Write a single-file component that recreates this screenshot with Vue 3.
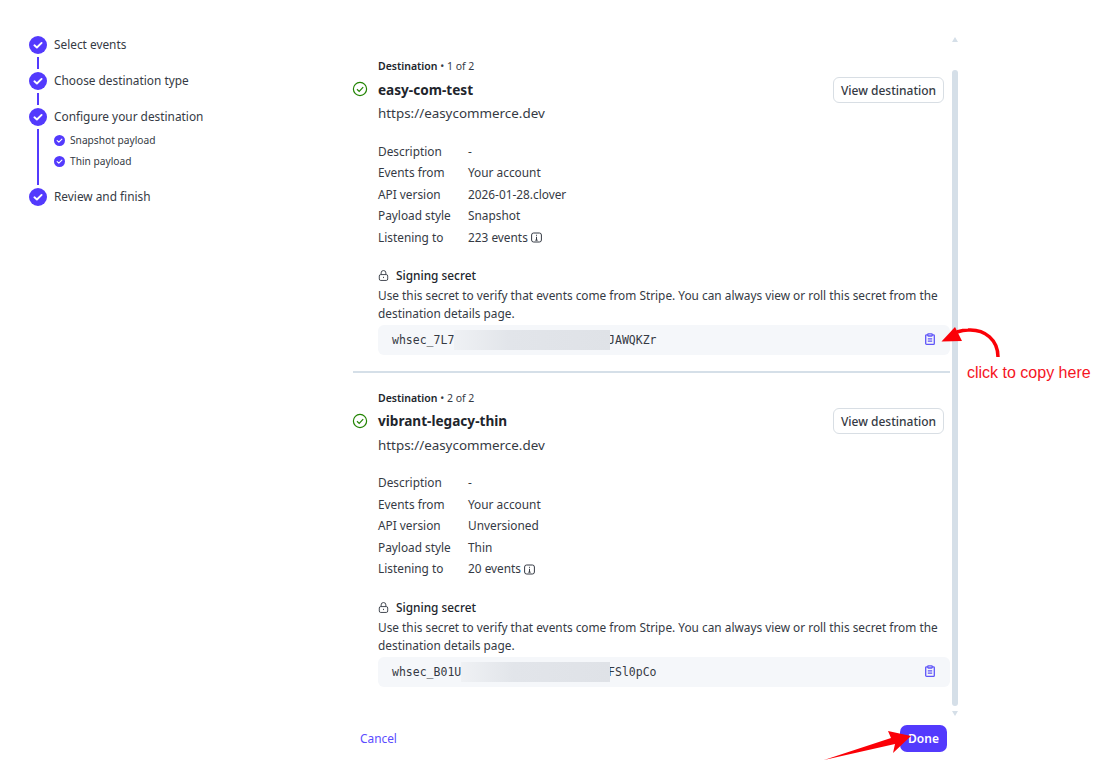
<script setup>
const destinations = [
  { index: 1, name: 'easy-com-test', version: '2026-01-28.clover', style: 'Snapshot', events: '223 events', start: 'whsec_7L7', end: 'JAWQKZr' },
  { index: 2, name: 'vibrant-legacy-thin', version: 'Unversioned', style: 'Thin', events: '20 events', start: 'whsec_B01U', end: 'FSl0pCo' }
]
const redactedWidth = (start) => `${218 - start.length * 6.92}px`
</script>

<template>
  <div class="page">
    <aside class="sidebar">
      <div class="step"><svg class="check" viewBox="0 0 18 18"><circle cx="9" cy="9" r="9" /><path d="M5.4 9.3l2.5 2.2 4.7-4.6" /></svg><span class="label">Select events</span></div>
      <div class="link"></div>
      <div class="step"><svg class="check" viewBox="0 0 18 18"><circle cx="9" cy="9" r="9" /><path d="M5.4 9.3l2.5 2.2 4.7-4.6" /></svg><span class="label">Choose destination type</span></div>
      <div class="link"></div>
      <div class="step"><svg class="check" viewBox="0 0 18 18"><circle cx="9" cy="9" r="9" /><path d="M5.4 9.3l2.5 2.2 4.7-4.6" /></svg><span class="label">Configure your destination</span></div>
      <div class="branch">
        <div class="link long"></div>
        <div class="subs">
          <div class="sub"><svg class="check small" viewBox="0 0 18 18"><circle cx="9" cy="9" r="9" /><path d="M5.2 9.3l2.7 2.4 5-4.9" /></svg>Snapshot payload</div>
          <div class="sub"><svg class="check small" viewBox="0 0 18 18"><circle cx="9" cy="9" r="9" /><path d="M5.2 9.3l2.7 2.4 5-4.9" /></svg>Thin payload</div>
        </div>
      </div>
      <div class="step"><svg class="check" viewBox="0 0 18 18"><circle cx="9" cy="9" r="9" /><path d="M5.4 9.3l2.5 2.2 4.7-4.6" /></svg><span class="label">Review and finish</span></div>
    </aside>

    <main class="main">
      <div class="scroll-row">
        <div class="content">
          <section v-for="d in destinations" :key="d.index" class="dest">
            <div class="eyebrow"><b>Destination</b> • {{ d.index }} of 2</div>
            <div class="title-row">
              <svg class="ok" viewBox="0 0 16 16"><circle cx="8" cy="8" r="6.6" /><path d="M5 8.3l2.2 2.1 4-4.2" /></svg>
              <h2>{{ d.name }}</h2>
              <button class="view">View destination</button>
            </div>
            <div class="url">https://easycommerce.dev</div>
            <dl class="facts">
              <dt>Description</dt><dd>-</dd>
              <dt>Events from</dt><dd>Your account</dd>
              <dt>API version</dt><dd>{{ d.version }}</dd>
              <dt>Payload style</dt><dd>{{ d.style }}</dd>
              <dt>Listening to</dt>
              <dd class="events">{{ d.events }}
                <svg class="info" viewBox="0 0 11 11"><rect x=".6" y="1" width="9.8" height="9" rx="2" /><path d="M5.500 4.800v3.400M4.300 8.200h2.400M5.500 2.800v1" /></svg>
              </dd>
            </dl>
            <div class="secret-head">
              <svg class="lock" viewBox="0 0 12 12"><rect x="1.400" y="5" width="9.200" height="6.400" rx="1.600" /><path d="M3.400 5V3.200a2.600 2.600 0 0 1 5.200 0V5M6 7.400v1.400" /></svg>
              Signing secret
            </div>
            <p class="secret-text">Use this secret to verify that events come from Stripe. You can always view or roll this secret from the destination details page.</p>
            <div class="code">
              <span class="plain">{{ d.start }}</span>
              <span class="redacted" :style="{ width: redactedWidth(d.start) }"></span>
              <span class="plain">{{ d.end }}</span>
              <svg class="copy" viewBox="0 0 10 12"><path d="M2.800 1.800H1.600a.9.9 0 0 0-.9.9v7.700a.9.9 0 0 0 .9.900h6.800a.9.9 0 0 0 .9-.9V2.700a.9.9 0 0 0-.9-.9H7.200" /><rect x="2.800" y=".8" width="4.400" height="2.200" rx=".5" /><path d="M2.800 5.800h4.400M2.800 8.200h4.400" /></svg>
            </div>
          </section>
        </div>
        <div class="scrollbar">
          <span class="arrow up"></span>
          <span class="thumb"></span>
          <span class="arrow down"></span>
        </div>
      </div>
      <footer class="footer">
        <a class="cancel">Cancel</a>
        <button class="done">Done</button>
      </footer>
    </main>

    <span class="note">click to copy here</span>
    <svg class="marks" viewBox="0 0 1107 774">
      <path class="curve" d="M998 357C998 340 985 329 968 330C964 330 960 331 957 332" />
      <polygon points="941.500,341.500 955,327 962,341" />
      <polygon points="824,760 891,738 888,731 911,736 893,753 895,744" />
    </svg>
  </div>
</template>

<style scoped>
.page { position: relative; width: 1107px; height: 774px; overflow: hidden; display: flex; background: #fff; color: #353a44; font-family: "Noto Sans", sans-serif; font-size: 11.850px; }
.sidebar { width: 353px; box-sizing: border-box; padding: 36px 0 0 29px; flex: none; }
.step { display: flex; align-items: center; gap: 7px; height: 18px; line-height: 18px; }
.label { margin-bottom: 2px; line-height: 16px; }
.check { width: 18px; height: 18px; flex: none; }
.check circle { fill: #533afd; }
.check path { fill: none; stroke: #fff; stroke-width: 1.9; stroke-linecap: round; stroke-linejoin: round; }
.check.small { width: 11px; height: 11px; }
.link { width: 2px; height: 12px; margin: 3px 0 3px 8px; background: #533afd; }
.branch { display: flex; }
.link.long { height: 56px; flex: none; }
.subs { margin: 7px 0 0 15px; display: flex; flex-direction: column; gap: 7px; }
.sub { display: flex; align-items: center; gap: 5px; height: 14px; font-size: 10.200px; }
.main { width: 610px; flex: none; }
.scroll-row { display: flex; height: 686px; }
.content { width: 597px; flex: none; padding-top: 41px; }
.dest { height: 332px; box-sizing: border-box; padding: 17px 0 0 25px; border-bottom: 2px solid #d5dfe8; }
.dest:last-child { border-bottom: 0; }
.eyebrow { font-size: 10.500px; line-height: 16px; color: #353a44; }
.eyebrow b { font-weight: 600; color: #21252c; }
.title-row { position: relative; height: 30px; display: flex; align-items: center; margin-top: 1px; }
.dest:last-child .title-row { margin-top: 0; }
.dest:last-child .url { margin-top: 0; }
.dest:last-child .ok { top: 7px; }
.dest:last-child .facts { margin-top: 18.450px; }
.dest:last-child .secret-head { margin-top: 18.550px; }
.ok { position: absolute; left: -26px; top: 6px; width: 16px; height: 16px; }
.ok circle, .ok path { fill: none; stroke: #228403; stroke-width: 1.200; }
h2 { margin: -2px 0 0; font-size: 13.600px; font-weight: 700; color: #21252c; }
.view { margin-left: auto; margin-right: 6px; height: 26px; width: 111px; padding: 0; border: 1px solid #d8dee4; border-radius: 6px; background: #fff; color: #353a44; font: 500 12px "Noto Sans", sans-serif; }
.url { font-size: 13.400px; line-height: 18px; margin-top: -1px; }
.facts { display: grid; grid-template-columns: 90px 1fr; margin: 18.600px 0 0; grid-auto-rows: 21.500px; line-height: 21.500px; }
dt, dd { margin: 0; }
.events { display: flex; align-items: center; gap: 3px; }
.info { width: 11px; height: 11px; fill: none; stroke: #353a44; stroke-width: 1; }
.secret-head { display: flex; align-items: center; gap: 7px; margin-top: 18.400px; height: 18px; font-weight: 500; color: #21252c; }
.lock { width: 11px; height: 11px; fill: none; stroke: #353a44; stroke-width: 1; }
.secret-text { margin: 2px 0 0; line-height: 18px; width: 570px; }
.code { position: relative; display: flex; align-items: center; height: 30px; margin-top: 3px; padding-left: 14px; border-radius: 6px; background: #f5f7fa; font: 11.500px "DejaVu Sans Mono", monospace; color: #353a44; }
.redacted { position: relative; height: 20px; margin-right: -2px; background: linear-gradient(90deg, #eff1f4 0, #e2e5ea 35%, #dfe2e7 100%); filter: blur(.5px); }
.copy { position: absolute; right: 15px; top: 8px; width: 10px; height: 12px; fill: none; stroke: #5f55f8; stroke-width: 1.300; }
.scrollbar { width: 6px; display: flex; flex-direction: column; align-items: center; margin-left: 2px; }
.arrow { width: 0; height: 0; flex: none; border-left: 3.500px solid transparent; border-right: 3.500px solid transparent; }
.up { border-bottom: 5px solid #d5dfe8; margin-top: 37px; }
.thumb { width: 6px; height: 636px; flex: none; margin: 28px 0 5px; border-radius: 3px; background: #d5dfe8; }
.down { border-top: 5px solid #d5dfe8; }
.footer { display: flex; justify-content: space-between; align-items: center; height: 27px; margin-top: 39px; padding: 0 0 0 7px; width: 594px; box-sizing: border-box; }
.cancel { color: #5b4bff; margin-bottom: 1px; line-height: 16px; }
.done { width: 47px; height: 27px; padding: 0; border: 0; border-radius: 7px; background: #533afd; color: #fff; font: 600 12px "Noto Sans", sans-serif; }
.note { position: absolute; left: 967px; top: 364px; color: #f5141e; font: 16px/18px "Liberation Sans", sans-serif; }
.marks { position: absolute; inset: 0; width: 1107px; height: 774px; pointer-events: none; }
.marks polygon { fill: #fb0007; }
.curve { fill: none; stroke: #fb0007; stroke-width: 3.500; }
</style>
